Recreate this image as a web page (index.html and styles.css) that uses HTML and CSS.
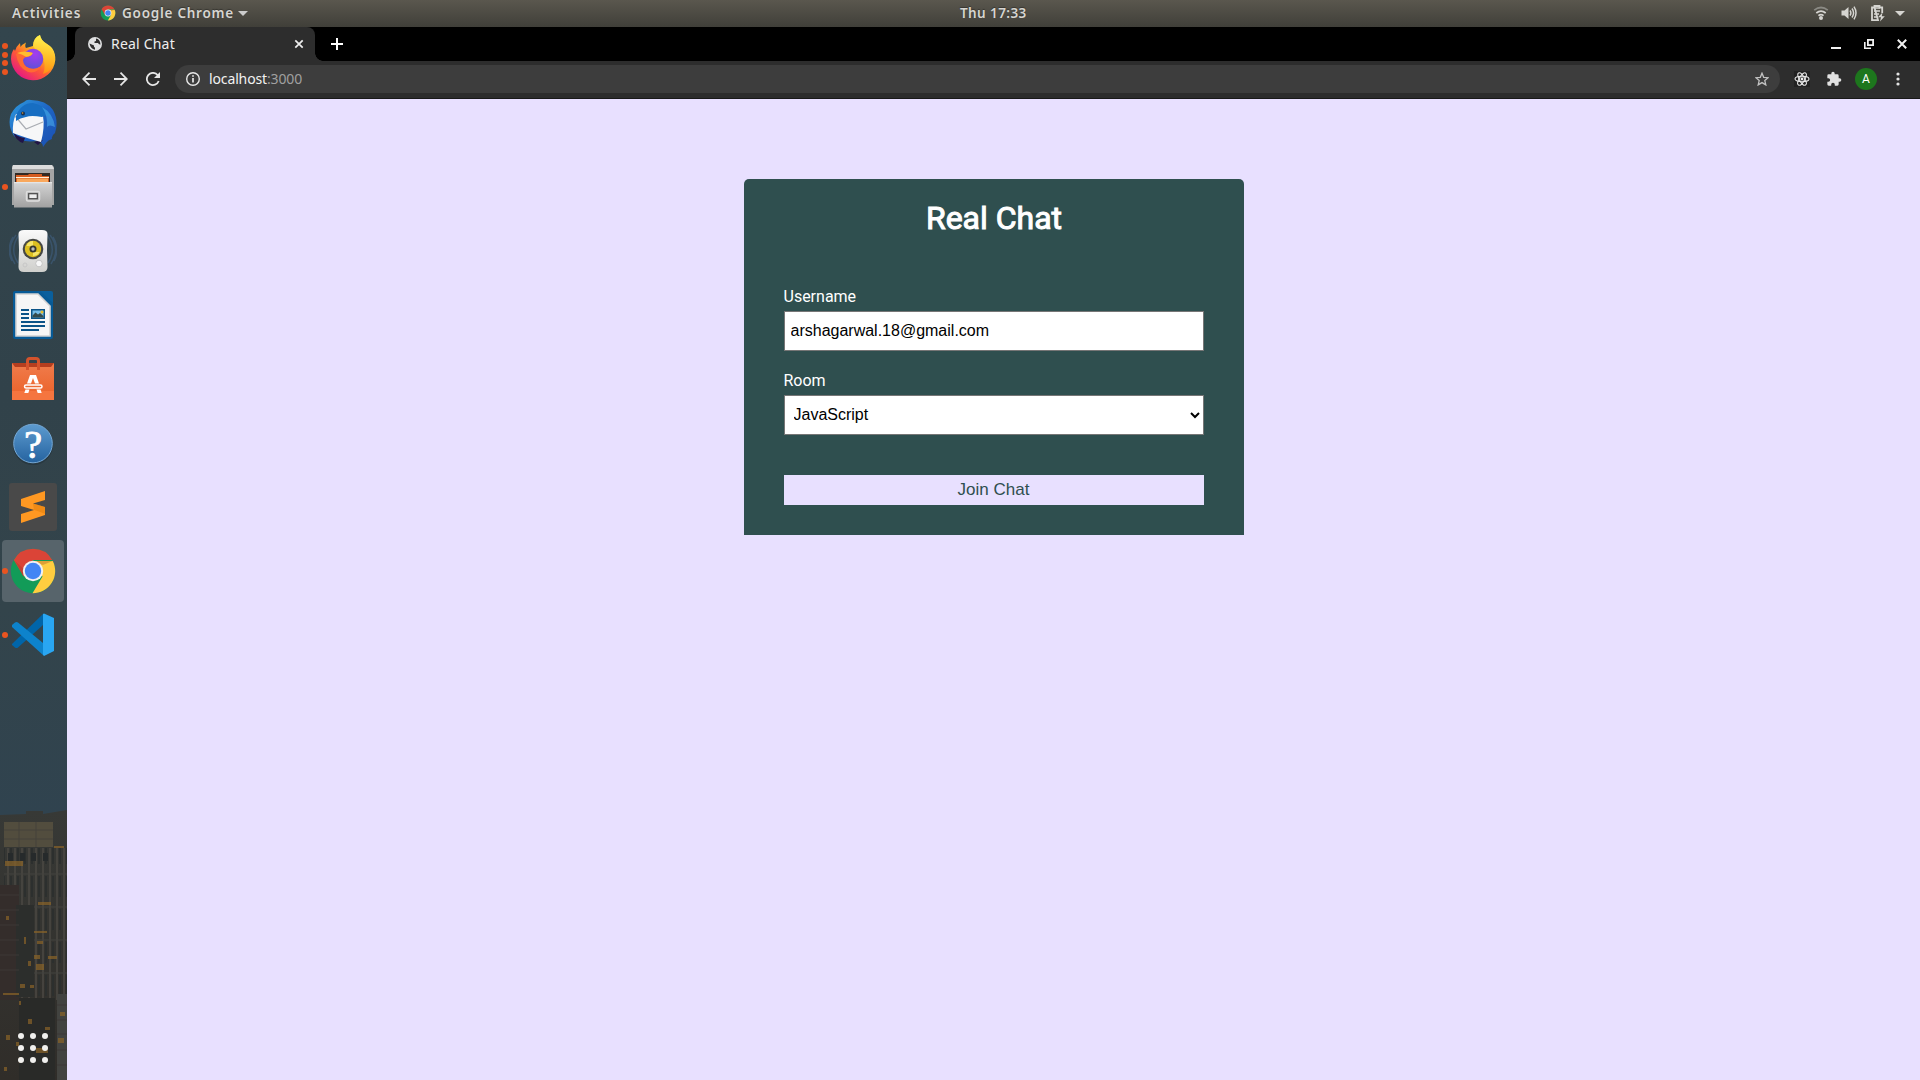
FILE: index.html
```
<!DOCTYPE html>
<html lang="en">
<head>
<meta charset="utf-8">
<title>Real Chat</title>
<link rel="stylesheet" href="styles.css">
</head>
<body>
<div class="desktop">
  <header class="topbar">
    <div class="topbar-left">
      <span class="activities">Activities</span>
      <svg class="app-icon" width="16" height="16" viewBox="0 0 48 48"><use href="#chrome-logo"/></svg>
      <span class="app-name">Google Chrome</span>
      <svg class="caret" width="10" height="5" viewBox="0 0 10 5"><path d="M0 0h10L5 5z" fill="#ccc"/></svg>
    </div>
    <span class="clock">Thu 17:33</span>
    <div class="topbar-right">
      <svg width="16" height="16" viewBox="0 0 16 16" fill="none" stroke="#d6d5d1" stroke-width="1.7"><path d="M1.2 5.2Q8-.2 14.8 5.2" stroke="#8b8a84"/><path d="M3.3 8Q8 4.200 12.700 8"/><path d="M5.400 10.600Q8 8.600 10.600 10.600"/><circle cx="8" cy="13" r="2" fill="#d6d5d1" stroke="none"/></svg>
      <svg width="16" height="16" viewBox="0 0 16 16"><path d="M.5 5.500h3L7.500 2v12l-4-3.500h-3z" fill="#d6d5d1"/><path d="M9 5.500q1.800 2.500 0 5M11 3.500q3.200 4.500 0 9M13 1.700q4 6.300 0 12.600" fill="none" stroke="#d6d5d1" stroke-width="1.500"/></svg>
      <svg width="16" height="17" viewBox="0 0 16 17"><path d="M4.500 2.500V1h5v1.500h2.700V8M8 15.200H2V2.500h2.500z" fill="none" stroke="#d6d5d1" stroke-width="1.800"/><path d="M4 3h6M4 6h6M4 9h5M4 12h3.500" stroke="#d6d5d1" stroke-width="1.500"/><path d="M12.500 7.500L8 12.200h3L10 16.500l4.800-5.200h-3z" fill="#d6d5d1"/></svg>
      <svg width="10" height="5" viewBox="0 0 10 5"><path d="M0 0h10L5 5z" fill="#d6d5d1"/></svg>
    </div>
  </header>

  <div class="workspace">
    <nav class="dock">
      <div class="dock-item raised">
        <span class="dots"><i></i><i></i><i></i><i></i></span>
        <svg width="48" height="48" viewBox="0 0 48 48">
          <defs>
            <linearGradient id="ff1" x1=".85" y1=".1" x2=".2" y2=".95"><stop offset="0" stop-color="#fff44f"/><stop offset=".35" stop-color="#ffb01f"/><stop offset=".62" stop-color="#ff5a35"/><stop offset="1" stop-color="#e31587"/></linearGradient>
            <radialGradient id="ff2" cx=".6" cy=".25" r=".8"><stop offset="0" stop-color="#a53cf0"/><stop offset="1" stop-color="#5a52d5"/></radialGradient>
            <linearGradient id="ff3" x1="0" y1="0" x2="0" y2="1"><stop offset="0" stop-color="#fff44f"/><stop offset="1" stop-color="#ff980e"/></linearGradient>
          </defs>
          <path d="M11 9L11.500 13Q13 10.500 17 8.500Q15.500 12 17 14L24 12Q24 4 31 1Q31.500 6 38 10L41 12L43 14Q46.500 19 46.300 26A22.200 22.200 0 0 1 2 25Q2 19 5 15L6 17Q7.500 12 11 9z" fill="url(#ff1)"/>
          <path d="M24 12Q24 4 31 1Q32 7 38 10Q46 16 46 25Q44 37 34 40Q39 28 29 18z" fill="url(#ff3)" opacity=".85"/>
          <circle cx="24" cy="25" r="10.300" fill="url(#ff2)"/>
          <path d="M7 20Q14 17 23 18.500Q24 22 18 23Q15 23 14 26Q14 32 20 34Q27 36 32 32Q28 40 19 38Q9 34 7 20z" fill="#ff6a32"/>
          <path d="M8 19Q15 16 24 19Q22 22.500 17 22.800Q13 20 8 19z" fill="#ffbd2e"/>
        </svg>
      </div>
      <div class="dock-item">
        <svg width="48" height="48" viewBox="0 0 48 48">
          <defs><linearGradient id="tb" x1="0" y1="0" x2="1" y2="1"><stop offset="0" stop-color="#2f9ddf"/><stop offset=".5" stop-color="#1e64c4"/><stop offset="1" stop-color="#1b4fb0"/></linearGradient></defs>
          <path d="M15 3Q18 0 22 1Q37 1 44 11Q50 22 46 34Q42 37 43 40Q39 41 37 44L34 48Q34 43 28 42Q12 44 5 37Q-2 26 2 15Q7 6 15 3z" fill="url(#tb)"/>
          <path d="M4 33Q8 38 16 39L14 44Q7 42 4 33zM25 43L34 41L29 46z" fill="#211447"/>
          <path d="M7 15Q20 14 34 17Q36 28 32 43Q20 40 4 34Q3 24 7 15z" fill="#f6f7f8"/>
          <path d="M6 17L17 30L34 23" fill="none" stroke="#a9adb3" stroke-width="1.200"/>
          <path d="M7 17Q12 4 24 4Q36 6 42 18Q38 15 33 18Q22 16 17 18Q11 19 7 22z" fill="#176ec2"/>
          <path d="M33 8Q44 14 46 28Q40 25 38 28Q39 17 33 8z" fill="#49a9ea" opacity=".6"/>
          <circle cx="14" cy="14.500" r="2" fill="#17304c"/><circle cx="13.600" cy="14" r=".8" fill="#e09a38"/>
        </svg>
      </div>
      <div class="dock-item">
        <span class="dots"><i></i></span>
        <svg width="48" height="48" viewBox="0 0 48 48">
          <defs><linearGradient id="fl" x1="0" y1="0" x2="0" y2="1"><stop offset="0" stop-color="#d5d5d5"/><stop offset="1" stop-color="#a1a1a1"/></linearGradient></defs>
          <path d="M4 2h39l2 2v38H3V4z" fill="#a5a5a5"/><path d="M4 2h39l2 4H3z" fill="#dcdcdc"/>
          <path d="M6 10h35v10H6z" fill="#332a24"/><path d="M7 12h12l1-1h13v2h7v7H7z" fill="#d65c20"/><path d="M8 15.500h31v3.500H8z" fill="#f9a85c"/><path d="M7 14h33v1H7z" fill="#fff0d8"/>
          <path d="M5 19h38v25.500H5z" fill="url(#fl)"/><path d="M5 19h38v1.200H5z" fill="#e5e5e5"/>
          <rect x="17.500" y="28.500" width="13" height="9.500" rx="1.500" fill="#b5b5b5" stroke="#dedede" stroke-width="1.500"/><rect x="19.700" y="30.700" width="8.600" height="5" fill="#eee" stroke="#484848" stroke-width="1.200"/>
        </svg>
      </div>
      <div class="dock-item raised">
        <svg width="48" height="48" viewBox="0 0 48 48">
          <defs><linearGradient id="rb" x1="0" y1="0" x2="0" y2="1"><stop offset="0" stop-color="#fafafa"/><stop offset="1" stop-color="#cfcfcc"/></linearGradient></defs>
          <g fill="none" stroke="#41648a" stroke-width="1.500" opacity=".5"><path d="M7 9Q-4 23 6 38M4 11Q-3 23 3 35M10 9Q0 23 9 37M41 9Q52 23 42 38M44 11Q51 23 45 35M38 9Q48 23 39 37"/></g>
          <path d="M9.500 8Q9.500 4 15 4H33Q38.500 4 38.500 8L38 24L38.500 41Q38.500 46 33 46H15Q9.500 46 9.500 41L10 24z" fill="url(#rb)"/>
          <circle cx="24" cy="23" r="10.300" fill="#454744"/><circle cx="24" cy="23" r="8.200" fill="#dcbf20"/><path d="M17.500 20A7 7 0 0 1 24 15v5zM30.500 26A7 7 0 0 1 24 30v-4z" fill="#f5e469"/><circle cx="24" cy="23" r="3.500" fill="#34352f"/><circle cx="24" cy="23" r="1.700" fill="#b9bdbb"/>
          <circle cx="30" cy="37.500" r="3.300" fill="#f7f7f7" stroke="#bbb" stroke-width=".8"/><circle cx="16" cy="39" r="2" fill="none" stroke="#c7c7c7"/>
        </svg>
      </div>
      <div class="dock-item">
        <svg width="48" height="48" viewBox="0 0 48 48">
          <path d="M6 0H34L44 10V46Q44 48 42 48H6Q4 48 4 46V2Q4 0 6 0z" fill="#075a96"/><path d="M31 0H42Q44 0 44 2V12z" fill="#0a5f9d"/>
          <path d="M7 3H29L41 15V45H7z" fill="#f6f6f6" stroke="#d2d2d2" stroke-width="1.600"/>
          <path d="M12 19h8M12 23h8M12 27h8M12 31h24M12 35h24M12 39h18" stroke="#0b5387" stroke-width="2"/>
          <path d="M22 18h14v10H22z" fill="#0b5387"/><path d="M23.500 19.500h11v7h-11z" fill="#76bce7"/><path d="M23.500 26.500v-2l3-3 2.500 2 2-1.500 3.500 3v1.500z" fill="#354a4b"/><circle cx="33" cy="21" r="1.500" fill="#e8bd28"/>
        </svg>
      </div>
      <div class="dock-item">
        <svg width="48" height="48" viewBox="0 0 48 48">
          <defs><linearGradient id="us" x1="0" y1="0" x2="0" y2="1"><stop offset="0" stop-color="#f07c4c"/><stop offset=".75" stop-color="#ec6730"/><stop offset="1" stop-color="#f0703b"/></linearGradient></defs>
          <path d="M3 8h42v6H3z" fill="#b53e1f"/><path d="M3 8l3 4h36l3-4v37H3z" fill="url(#us)"/><path d="M3 36h42v9H3z" fill="#f5753f"/>
          <path d="M18.500 15V6Q18.500 3.500 21 3.500H27Q29.500 3.500 29.500 6V15" fill="none" stroke="#d4532c" stroke-width="3"/>
          <path d="M21 20h6l3 8.500h-4L24 23l-2 5.500h-4z" fill="#fff"/><rect x="15.500" y="30" width="17.500" height="3" rx="1.500" fill="none" stroke="#fff" stroke-width="1.500"/><path d="M16.500 34.500h4l-1.200 3.500h-4zM27.500 34.500h4l1.200 3.500h-4z" fill="#fff"/>
        </svg>
      </div>
      <div class="dock-item">
        <svg width="48" height="48" viewBox="0 0 48 48">
          <defs><linearGradient id="hp" x1="0" y1="0" x2="0" y2="1"><stop offset="0" stop-color="#5d9bcf"/><stop offset="1" stop-color="#2563a0"/></linearGradient></defs>
          <circle cx="24" cy="26" r="20" fill="#202d35" opacity=".5"/><circle cx="24" cy="24.500" r="19.300" fill="url(#hp)" stroke="#75a8d5"/>
          <text x="24" y="39" text-anchor="middle" class="help-mark">?</text>
        </svg>
      </div>
      <div class="dock-item">
        <svg width="48" height="48" viewBox="0 0 48 48">
          <rect width="48" height="48" rx="3" fill="#494949"/><path d="M36 8v9l-12 3.500L36 24v8L12 40v-9l13-4-13-4v-7z" fill="#ff9822"/><path d="M24 20.500L36 24v7q-6-3-18-6l7 2z" fill="#e07b08" opacity=".5"/>
        </svg>
      </div>
      <div class="dock-item selected">
        <span class="dots"><i></i></span>
        <svg width="48" height="48" viewBox="0 0 48 48">
          <g id="chrome-logo"><circle cx="24" cy="24" r="22.200" fill="#129b58"/><path d="M4.800 13A22.200 22.200 0 0 1 43.300 13H24L14.500 29.500z" fill="#db4437"/><path d="M43.800 14A22.200 22.200 0 0 1 23.500 46.200L33.500 29.500 24 14z" fill="#ffcd40"/><path d="M24 14h19.800l-10 4zM6 14l8.500 15.500.8-7z" fill="#8d3824" opacity=".3"/><circle cx="24" cy="24" r="10.200" fill="#f1f1f1"/><circle cx="24" cy="24" r="8.200" fill="#4285f4"/></g>
        </svg>
      </div>
      <div class="dock-item">
        <span class="dots"><i></i></span>
        <svg width="48" height="48" viewBox="0 0 48 48">
          <path d="M3 33L34 3v11L9 36.500Q7.500 37.500 6 36.500L3 34z" fill="#0065a9"/><path d="M3 14l3-2.500Q7.500 10.500 9 11.500L34 32v12L3 16z" fill="#0d83cc"/><path d="M34 3l1-.5L45 7V40L35 45l-1-1z" fill="#29a6f2"/>
        </svg>
      </div>
      <svg class="city" width="67" height="270" viewBox="0 0 67 270">
        <defs>
          <linearGradient id="fade" x1="0" y1="0" x2="0" y2="1"><stop offset="0" stop-color="#373936"/><stop offset="1" stop-color="#302d29"/></linearGradient>
          <pattern id="ribs" width="7" height="33" patternUnits="userSpaceOnUse"><path d="M1 0v33" stroke="#4a4843" stroke-width="1.500"/><path d="M4 0v21" stroke="#2c2f2e" stroke-width="2"/><path d="M0 31h7" stroke="#42423e"/></pattern>
        </defs>
        <path d="M0 5L26 4V1h17v3L67 0v270H0z" fill="url(#fade)"/>
        <path d="M4 12h49v25H4z" fill="#524d3e"/><path d="M4 20h49M4 29h49M19 12v25M36 12v25" stroke="#45433a"/>
        <path d="M4 38h63v152H4z" fill="url(#ribs)"/>
        <path d="M0 75h19v115H0z" fill="#342d2b"/><path d="M16 95h18v92H16z" fill="#2c2e2c"/><path d="M19 188h36v82H19z" fill="#292a28"/><path d="M57 184h10v86H57z" fill="#424340"/>
        <path d="M0 85h19M0 100h19M0 115h19M0 130h19M0 145h19M0 160h19M57 195h10M57 210h10M57 224h10M57 240h10M57 255h10" stroke="#3d3836"/>
        <path d="M8 51V43h5v8M20 51V43h5v8M31 51V43h5v8M43 51V43h5v8" fill="#262a2b"/>
        <g fill="#8a6428" opacity=".7"><path d="M5 51h18v5H5zM54 36h10v2H54zM38 92h13v3H38zM6 106h3v4H6zM34 121h13v2H34zM37 131h6v3h-6zM34 145h6v4h-6zM48 146h9v3h-9zM36 154h8v6h-8zM24 127h2v7h-2zM28 151h3v5h-3zM20 174h5v4h-5zM30 175h4v3h-4zM3 183h16v2H3zM19 191h2v4h-2zM28 209h4v5h-4zM6 225h4v5H6zM16 232h3v4h-3zM58 228h6v5h-6zM36 238h12v5H36zM45 217h5v3h-5zM19 247h3v6h-3zM60 202h5v4h-5zM4 257h3v4H4z"/></g>
      </svg>
      <div class="apps-grid"><i></i><i></i><i></i><i></i><i></i><i></i><i></i><i></i><i></i></div>
    </nav>

    <main class="browser">
      <div class="tabstrip">
        <div class="tab">
          <svg width="14" height="14" viewBox="0 0 14 14"><circle cx="7" cy="7" r="7" fill="#dfe0e1"/><path d="M1.500 6.500L6 8.500v1.300l1 1v2Q2.500 12 1.500 6.500zM8 1.600Q12 2 12.500 7.500L11 7.200 10 6H6.500V4.500L8 4z" fill="#2d2d2d"/></svg>
          <span class="tab-title">Real Chat</span>
          <svg width="10" height="10" viewBox="0 0 10 10"><path d="M1.300 1.300l7.400 7.400M8.700 1.300L1.300 8.700" stroke="#eee" stroke-width="1.700"/></svg>
        </div>
        <svg class="new-tab" width="12" height="12" viewBox="0 0 12 12"><path d="M6 0v12M0 6h12" stroke="#fff" stroke-width="2"/></svg>
        <div class="window-buttons">
          <svg width="10" height="10" viewBox="0 0 10 10"><path d="M0 9h10" stroke="#f1f1f1" stroke-width="2"/></svg>
          <svg width="10" height="10" viewBox="0 0 10 10"><path d="M3.900.900h5.200v5.200H3.900z" fill="none" stroke="#f1f1f1" stroke-width="1.800"/><path d="M.8 3v6.200H7" fill="none" stroke="#f1f1f1" stroke-width="1.600"/></svg>
          <svg width="10" height="10" viewBox="0 0 10 10"><path d="M.8.800l8.400 8.400M9.200.8L.8 9.200" stroke="#f1f1f1" stroke-width="2"/></svg>
        </div>
      </div>
      <div class="toolbar">
        <div class="nav-buttons">
          <svg width="14" height="14" viewBox="0 0 14 14"><path d="M14 7H1.500M7.500.7L1.200 7l6.300 6.300" fill="none" stroke="#e6e6e6" stroke-width="1.800"/></svg>
          <svg width="14" height="14" viewBox="0 0 14 14"><path d="M0 7h12.500M6.500.7L12.800 7l-6.300 6.300" fill="none" stroke="#e6e6e6" stroke-width="1.800"/></svg>
          <svg width="14" height="14" viewBox="0 0 14 14"><path d="M12.700 9A6.100 6.100 0 1 1 11.600 3L13 4.400" fill="none" stroke="#e6e6e6" stroke-width="1.800"/><path d="M14 0v6H8z" fill="#e6e6e6"/></svg>
        </div>
        <div class="omnibox">
          <svg width="14" height="14" viewBox="0 0 14 14"><circle cx="7" cy="7" r="6.300" fill="none" stroke="#e8e8e8" stroke-width="1.400"/><path d="M7 6v4.500M7 3.200v1.600" stroke="#e8e8e8" stroke-width="1.700"/></svg>
          <span class="url">localhost<span class="port">:3000</span></span>
          <svg class="star" width="14" height="14" viewBox="0 0 14 14"><path d="M7 1.200l1.700 4.100 4.400.4-3.300 2.900 1 4.300L7 10.600l-3.800 2.300 1-4.300L.9 5.700l4.400-.4z" fill="none" stroke="#c3c3c3" stroke-width="1.300"/></svg>
        </div>
        <div class="extensions">
          <svg width="16" height="16" viewBox="0 0 16 16"><path d="M0 0h16v16H0z" fill="#222"/><g fill="none" stroke="#e8e8e8" stroke-width="1.100"><ellipse cx="8" cy="8" rx="7" ry="2.700"/><ellipse cx="8" cy="8" rx="7" ry="2.700" transform="rotate(60 8 8)"/><ellipse cx="8" cy="8" rx="7" ry="2.700" transform="rotate(120 8 8)"/></g><circle cx="8" cy="8" r="1.400" fill="#eee"/></svg>
          <svg width="16" height="16" viewBox="0 0 24 24"><path d="M20.500 11H19V7a2 2 0 0 0-2-2h-4V3.500a2.500 2.500 0 0 0-5 0V5H4a2 2 0 0 0-2 2v3.800h1.500a2.700 2.700 0 0 1 0 5.400H2V20a2 2 0 0 0 2 2h3.800v-1.500a2.700 2.700 0 0 1 5.400 0V22H17a2 2 0 0 0 2-2v-4h1.500a2.500 2.500 0 0 0 0-5z" fill="#e1e1e1"/></svg>
          <span class="avatar">A</span>
          <svg width="4" height="14" viewBox="0 0 4 14" fill="#e3e3e3"><circle cx="2" cy="2" r="1.600"/><circle cx="2" cy="7" r="1.600"/><circle cx="2" cy="12" r="1.600"/></svg>
        </div>
      </div>
      <section class="page">
        <form class="card">
          <h1>Real Chat</h1>
          <div class="field">
            <label for="username">Username</label>
            <input id="username" type="text" value="arshagarwal.18@gmail.com">
          </div>
          <div class="field">
            <label for="room">Room</label>
            <select id="room"><option>JavaScript</option></select>
          </div>
          <button type="button">Join Chat</button>
        </form>
      </section>
    </main>
  </div>
</div>
</body>
</html>
```
FILE: styles.css
```
* { box-sizing: border-box; }
body { margin: 0; overflow: hidden; }
svg { display: block; flex: none; }

.desktop { width: 1920px; height: 1080px; display: flex; flex-direction: column; font-family: "Noto Sans", "Open Sans", sans-serif; }

.topbar { height: 27px; flex: none; display: grid; grid-template-columns: 948px auto 1fr; align-items: center; padding: 0 15px 1px 12px; background: linear-gradient(#5a574e, #403f39); color: #d6d5d1; font-size: 13.5px; font-weight: 600; line-height: 26px; white-space: nowrap; text-shadow: 0 -1px 1px rgba(0, 0, 0, .35); }
.topbar-left { display: flex; align-items: center; }
.activities { width: 88px; letter-spacing: .9px; }
.app-icon { margin-right: 6px; }
.app-name { width: 116px; letter-spacing: .75px; }
.clock { letter-spacing: .4px; }
.topbar-right { display: flex; align-items: center; justify-content: flex-end; gap: 12px; }
.topbar-right > :nth-child(2) { margin-right: 1px; }
.topbar-right > :last-child { margin-left: -3px; }

.workspace { flex: 1; display: flex; min-height: 0; }

.dock { position: relative; width: 67px; flex: none; display: flex; flex-direction: column; gap: 2px; padding: 1px 3px 0 2px; background: linear-gradient(#33454d 0, #31424a 35%, #33444b 55%, #30434f 75%); }
.dock-item { position: relative; height: 62px; flex: none; display: flex; align-items: center; justify-content: center; border-radius: 4px; }
.dock-item.raised { padding-bottom: 2px; }
.dock-item.selected { background: #57646b; }
.dots { position: absolute; left: 0; top: 0; height: 100%; display: flex; flex-direction: column; justify-content: center; gap: 2.5px; }
.dots i { width: 6px; height: 6px; border-radius: 50%; background: #e95420; }
.help-mark { font: 41px "Liberation Serif", serif; fill: #fff; stroke: #fff; stroke-width: .8px; }
.city { margin: auto 0 0 -2px; }
.apps-grid { position: absolute; left: 18px; bottom: 17px; display: grid; grid-template-columns: repeat(3, 6px); gap: 6px; }
.apps-grid i { width: 6px; height: 6px; border-radius: 50%; background: #f0f0ee; }

.browser { flex: 1; display: flex; flex-direction: column; min-width: 0; }
.tabstrip { height: 34px; flex: none; display: flex; align-items: center; background: #000; padding: 0 13px 0 8px; }
.tab { position: relative; width: 240px; height: 34px; display: flex; align-items: center; padding: 0 11px 0 13px; background: #2d2d2d; border-radius: 8px 8px 0 0; color: #eee; font-size: 14px; }
.tab::before, .tab::after { content: ""; position: absolute; bottom: 0; width: 8px; height: 8px; }
.tab::before { left: -8px; background: radial-gradient(circle at 0 0, transparent 7.500px, #2d2d2d 8px); }
.tab::after { right: -8px; background: radial-gradient(circle at 100% 0, transparent 7.500px, #2d2d2d 8px); }
.tab-title { flex: 1; margin-left: 9px; line-height: 20px; letter-spacing: .2px; }
.new-tab { margin-left: 16px; }
.window-buttons { margin-left: auto; display: flex; gap: 23px; }

.toolbar { height: 38px; flex: none; display: flex; align-items: center; padding: 0 20px 2px 15px; background: #2d2d2d; border-bottom: 1px solid #191919; }
.nav-buttons { display: flex; gap: 18px; }
.omnibox { flex: 1; height: 28px; margin: 0 14px 0 15px; padding: 0 11px; display: flex; align-items: center; background: #3d3d3d; border-radius: 14px; }
.url { margin-left: 9px; font-size: 14px; line-height: 20px; letter-spacing: -.13px; color: #f2f2f2; }
.port { color: #a0a0a0; }
.star { margin-left: auto; }
.extensions { display: flex; align-items: center; }
.extensions > * { margin-right: 16px; }
.extensions > :nth-child(2) { margin-right: 13px; }
.extensions > .avatar { margin-right: 19px; }
.extensions > :last-child { margin-right: 0; }
.avatar { width: 22px; height: 22px; border-radius: 50%; background: #1d761d; color: #fff; font: 12px/22px Roboto, sans-serif; text-align: center; }

.page { flex: 1; display: flex; justify-content: center; align-items: flex-start; padding-top: 80px; background: #e8e0ff; }
.card { width: 500px; height: 356px; display: flex; flex-direction: column; padding: 21px 40px 30px; background: #2f4f4f; border-radius: 5px 5px 0 0; color: #fff; font: 16px/19px Roboto, sans-serif; }
.card h1 { margin: 0 0 50px; padding-left: 1px; font-size: 32px; font-weight: 400; line-height: 37px; text-align: center; -webkit-text-stroke: 1px #fff; }
.field { display: flex; flex-direction: column; gap: 5px; margin-bottom: 20px; }
.field input, .field select { width: 100%; height: 40px; padding: 5px; border: 1px solid #767676; border-radius: 0; background: #fff; color: #000; font: 16px "Liberation Sans", Arial, sans-serif; }
.field input { padding-left: 6px; }
.field select { padding-bottom: 7px; }
.card button { height: 30px; margin-top: auto; padding: 0; border: 0; background: #e8e0ff; color: #2f4f4f; font: 17px "Liberation Sans", Arial, sans-serif; }
```
